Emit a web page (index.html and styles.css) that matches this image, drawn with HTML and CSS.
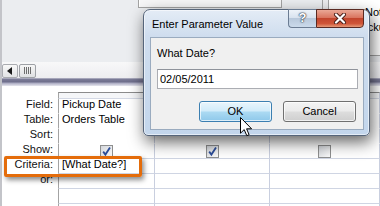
FILE: index.html
```html
<!DOCTYPE html>
<html>
<head>
<meta charset="utf-8">
<link rel="stylesheet" href="styles.css">
</head>
<body>
<div class="app">
  <div class="canvas">
    <div class="fl fl1"></div>
    <div class="fl fl2">
      <div class="fl-list">
        <div class="fl-item">Notes</div>
        <div class="fl-item fl-shift">Pickup</div>
      </div>
    </div>
  </div>
  <div class="hscroll">
    <div class="sb-btn"><span class="sb-arrow"></span></div>
    <div class="sb-thumb"><span class="grip"></span></div>
  </div>
  <div class="splitter"></div>
  <div class="design">
    <div class="spacer"></div>

    <div class="lbl"></div>
    <div class="sel c1"></div><div class="sel c2"></div><div class="sel c3"></div>

    <div class="lbl">Field:</div>
    <div class="cell c1 nb">Pickup Date</div><div class="cell c2 nb"></div><div class="cell c3 nb"></div>

    <div class="lbl">Table:</div>
    <div class="cell c1 nb">Orders Table</div><div class="cell c2 nb"></div><div class="cell c3 nb"></div>

    <div class="lbl">Sort:</div>
    <div class="cell c1 nb"></div><div class="cell c2 nb"></div><div class="cell c3 nb"></div>

    <div class="lbl">Show:</div>
    <div class="cell c1 show"><span class="chk"><svg width="11" height="11" viewBox="0 0 11 11"><path d="M2.2 5.6 L4.4 8.6 L9 1.6" fill="none" stroke="#2b4c98" stroke-width="1.8"/></svg></span></div>
    <div class="cell c2 show"><span class="chk"><svg width="11" height="11" viewBox="0 0 11 11"><path d="M2.2 5.6 L4.4 8.6 L9 1.6" fill="none" stroke="#2b4c98" stroke-width="1.8"/></svg></span></div>
    <div class="cell c3 show"><span class="chk"></span></div>

    <div class="lbl">Criteria:</div>
    <div class="cell c1">[What Date?]</div><div class="cell c2"></div><div class="cell c3"></div>

    <div class="lbl">or:</div>
    <div class="cell c1"></div><div class="cell c2"></div><div class="cell c3"></div>

    <div class="lbl"></div>
    <div class="cell c1"></div><div class="cell c2"></div><div class="cell c3"></div>

    <div class="lbl"></div>
    <div class="cell c1"></div><div class="cell c2"></div><div class="cell c3"></div>
  </div>
</div>

<div class="highlight"></div>

<div class="dialog">
  <div class="dlg-title">Enter Parameter Value</div>
  <div class="caps">
    <div class="cap-help">?</div>
    <div class="cap-close"><svg width="14" height="11" viewBox="0 0 14 11"><path d="M3 1.5 L11 9.5 M11 1.5 L3 9.5" stroke="#4a1f18" stroke-width="4" stroke-linecap="round"/><path d="M3 1.5 L11 9.5 M11 1.5 L3 9.5" stroke="#ffffff" stroke-width="2.2" stroke-linecap="round"/></svg></div>
  </div>
  <div class="dlg-body">
    <div class="prompt">What Date?</div>
    <div class="input">02/05/2011</div>
    <div class="btns">
      <div class="btn ok">OK</div>
      <div class="btn">Cancel</div>
    </div>
  </div>
</div>

<svg class="cursor" width="13" height="20" viewBox="0 0 13 20"><path d="M0.5 0.5 V16.2 L4.2 12.6 L6.8 18.7 L9.1 17.7 L6.6 11.8 H11.6 Z" fill="#ffffff" stroke="#000000" stroke-width="1" stroke-linejoin="miter"/></svg>
</body>
</html>
```
FILE: styles.css
```css
html, body {
  margin: 0;
  padding: 0;
}
body {
  width: 380px;
  height: 206px;
  overflow: hidden;
  position: relative;
  background: #ffffff;
  font-family: "Liberation Sans", Arial, sans-serif;
  font-size: 11px;
  color: #000;
}

.app {
  height: 206px;
  box-sizing: border-box;
  border-left: 2px solid #c3c4c9;
  display: flex;
  flex-direction: column;
  overflow: hidden;
}

/* query design canvas */
.canvas {
  position: relative;
  height: 62px;
  flex: none;
  background: #ebedf0;
  overflow: hidden;
}
.fl {
  position: absolute;
  box-sizing: border-box;
  border: 1px solid #a3a3a3;
}
.fl1 {
  left: 136px;
  top: -10px;
  width: 144px;
  height: 18px;
  background: #f6f6f7;
  box-shadow: inset 1px 0 0 #ffffff;
}
.fl2 {
  left: 320px;
  top: -30px;
  width: 90px;
  height: 86px;
  background: #ececee;
  padding-left: 5px;
}
.fl-list {
  height: 100%;
  box-sizing: border-box;
  border-left: 1px solid #a3a3a3;
  background: #ffffff;
  padding: 34px 0 0 36px;
}
.fl-item {
  line-height: 15px;
  white-space: nowrap;
}
.fl-shift {
  text-indent: -7px;
}

/* horizontal scrollbar */
.hscroll {
  height: 16px;
  flex: none;
  box-sizing: border-box;
  padding-top: 1px;
  background: linear-gradient(#f8f8f9, #ededf0);
  display: flex;
  align-items: center;
  gap: 1px;
}
.sb-btn {
  width: 16px;
  height: 14px;
  box-sizing: border-box;
  border: 1px solid #a9abb0;
  border-radius: 2px;
  background: linear-gradient(#f8f8f8, #e2e3e5);
  display: flex;
  align-items: center;
  justify-content: center;
}
.sb-arrow {
  width: 0;
  height: 0;
  border-top: 4px solid transparent;
  border-bottom: 4px solid transparent;
  border-right: 5px solid #1a1a1a;
  margin-right: 1px;
}
.sb-thumb {
  width: 17px;
  height: 14px;
  box-sizing: border-box;
  border: 1px solid #9ea1a6;
  border-radius: 2px;
  background: linear-gradient(#f6f6f6, #dfe0e2);
  display: flex;
  align-items: center;
  justify-content: center;
}
.grip {
  width: 7px;
  height: 7px;
  background: repeating-linear-gradient(90deg, #6e6e6e 0 1px, transparent 1px 2px);
}

.splitter {
  height: 8px;
  flex: none;
  background: linear-gradient(#d0d0dc 0, #7c7c98 1px, #6e6e8b 4px, #a9a9c0 5px, #e6e6ee 8px);
}

/* design grid */
.design {
  flex: none;
  height: 120px;
  overflow: hidden;
  display: grid;
  grid-template-columns: 56px 97px 115px 1fr;
  grid-template-rows: 6px 7px repeat(8, 15px);
  background: #ffffff;
}
.spacer {
  grid-column: 1 / -1;
}
.lbl {
  text-align: right;
  padding-right: 5px;
  line-height: 11px;
  color: #111;
  white-space: nowrap;
}
.sel {
  box-sizing: border-box;
  border-top: 1px solid #8b8b8b;
  border-bottom: 1px solid #d3d8e4;
  border-right: 1px solid #c9cfdf;
  background: #f5f6f8;
}
.cell {
  box-sizing: border-box;
  border-right: 1px solid #c9cfdf;
  border-bottom: 1px solid #cfd5e3;
  padding-left: 3px;
  line-height: 11px;
  white-space: nowrap;
  overflow: hidden;
}
.cell.nb {
  border-bottom-color: transparent;
}
.c1 {
  border-left: 1px solid #a3a3a3;
}
.show {
  padding-left: 0;
  display: flex;
  justify-content: center;
  align-items: flex-start;
}
.chk {
  width: 13px;
  height: 13px;
  box-sizing: border-box;
  margin-top: 1px;
  border: 1px solid #8e8f8f;
  background: linear-gradient(135deg, #d3d6db, #fbfbfb);
  display: flex;
  align-items: center;
  justify-content: center;
}

/* orange callout */
.highlight {
  position: absolute;
  left: 4px;
  top: 156px;
  width: 138px;
  height: 21px;
  box-sizing: border-box;
  border: 3px solid #e46c0a;
  border-radius: 2px;
  box-shadow: 2px 3px 5px rgba(0, 0, 0, 0.45);
}

/* dialog */
.dialog {
  position: absolute;
  left: 143px;
  top: 9px;
  width: 227px;
  height: 127px;
  box-sizing: border-box;
  border: 1px solid #56657a;
  border-radius: 7px 7px 5px 5px;
  background: linear-gradient(#e4ecf6, #cfddee 26px, #c3d6ec);
  box-shadow: inset 0 0 0 1px rgba(255, 255, 255, 0.55), 2px 6px 16px rgba(0, 0, 0, 0.62);
  display: flex;
  flex-direction: column;
}
.dlg-title {
  height: 27px;
  flex: none;
  box-sizing: border-box;
  padding: 8px 0 0 8px;
  line-height: 13px;
  color: #000;
  white-space: nowrap;
}
.caps {
  position: absolute;
  top: -1px;
  right: 5px;
  display: flex;
  height: 19px;
}
.cap-help {
  width: 28px;
  height: 19px;
  box-sizing: border-box;
  border: 1px solid #6b7c93;
  border-right: none;
  border-radius: 0 0 0 4px;
  background: linear-gradient(#eef3f9 0, #d9e3ef 45%, #b8c8db 50%, #cbdaeb 100%);
  color: #ffffff;
  font-weight: bold;
  font-size: 13px;
  line-height: 16px;
  text-align: center;
  text-shadow: 0 0 1px #2e3a4a, 0 0 1px #2e3a4a, 0 0 2px #2e3a4a;
}
.cap-close {
  width: 48px;
  height: 19px;
  box-sizing: border-box;
  border: 1px solid #5a2a22;
  border-radius: 0 0 4px 0;
  background: linear-gradient(#eaa896 0, #d9755f 45%, #c2452d 50%, #cf5538 80%, #e69a78 100%);
  display: flex;
  align-items: center;
  justify-content: center;
}
.dlg-body {
  flex: 1;
  margin: 0 5px 5px 6px;
  box-sizing: border-box;
  border: 1px solid #9aabbf;
  background: #f0f0f0;
  padding: 9px 0 0 6px;
}
.prompt {
  line-height: 13px;
  white-space: nowrap;
}
.input {
  margin-top: 9px;
  width: 201px;
  height: 20px;
  box-sizing: border-box;
  border: 1px solid #abadb3;
  border-top-color: #8f939b;
  background: #ffffff;
  padding-left: 2px;
  line-height: 18px;
}
.btns {
  margin-top: 12px;
  display: flex;
  justify-content: flex-end;
  gap: 11px;
  padding-right: 7px;
}
.btn {
  width: 73px;
  height: 21px;
  box-sizing: border-box;
  border: 1px solid #707070;
  border-radius: 3px;
  background: linear-gradient(#f4f4f4 0, #ebebeb 48%, #dddddd 52%, #cfcfcf 100%);
  box-shadow: inset 0 0 0 1px rgba(255, 255, 255, 0.7);
  text-align: center;
  line-height: 19px;
}
.btn.ok {
  border-color: #3c7fb1;
  background: linear-gradient(#e9f5fc 0, #d2ecfa 45%, #aad9f2 55%, #8ec8ea 100%);
}

.cursor {
  position: absolute;
  left: 240px;
  top: 117px;
}
```
